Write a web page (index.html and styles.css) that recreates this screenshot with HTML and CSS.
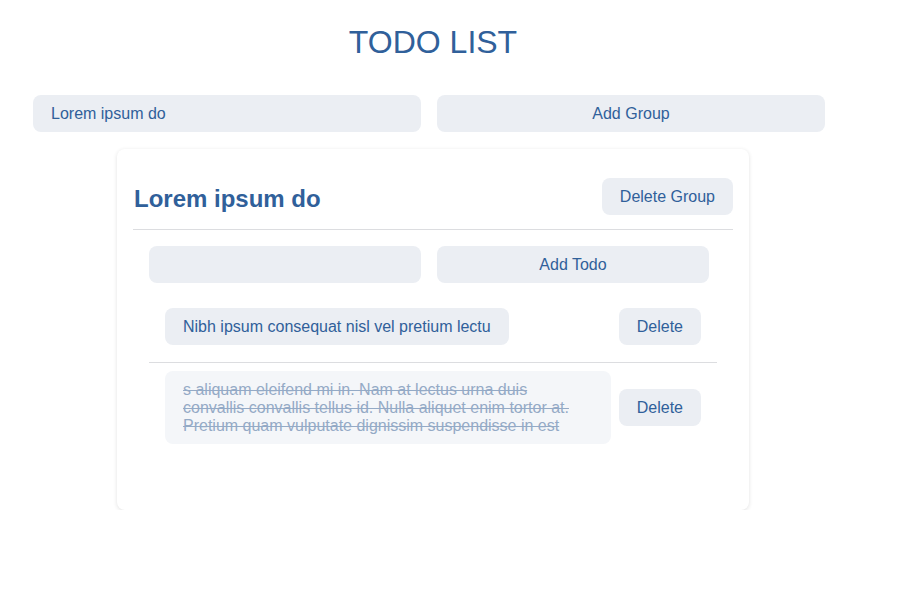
FILE: index.html
```html
<!DOCTYPE html>
<html lang="en">
<head>
<meta charset="utf-8">
<title>Todo List</title>
<link rel="stylesheet" href="styles.css">
</head>
<body>
<div class="app">
  <h1 class="title">TODO LIST</h1>
  <div class="add-group">
    <input class="field" type="text" value="Lorem ipsum do">
    <button class="btn">Add Group</button>
  </div>
  <section class="card">
    <header class="card-header">
      <h2 class="group-name">Lorem ipsum do</h2>
      <button class="btn">Delete Group</button>
    </header>
    <div class="add-todo">
      <input class="field" type="text" value="">
      <button class="btn">Add Todo</button>
    </div>
    <ul class="todos">
      <li class="todo">
        <span class="todo-text">Nibh ipsum consequat nisl vel pretium lectu</span>
        <button class="btn">Delete</button>
      </li>
      <li class="todo">
        <span class="todo-text done">s aliquam eleifend mi in. Nam at lectus urna duis convallis convallis tellus id. Nulla aliquet enim tortor at. Pretium quam vulputate dignissim suspendisse in est</span>
        <button class="btn">Delete</button>
      </li>
    </ul>
  </section>
</div>
</body>
</html>
```

FILE: styles.css
```css
* { box-sizing: border-box; }

body {
  margin: 0;
  background: #ffffff;
  font-family: "Liberation Sans", Arial, sans-serif;
  color: #30609a;
}

.app {
  width: 866px;
  padding-top: 24px;
}

.title {
  margin: 0 0 34px;
  text-align: center;
  font-size: 32px;
  font-weight: normal;
  line-height: 37px;
  color: #30609a;
}

.add-group {
  display: grid;
  grid-template-columns: 1fr 1fr;
  gap: 16px;
  margin: 0 41px 0 33px;
}

.field,
.btn {
  height: 37px;
  border: none;
  border-radius: 8px;
  background: #ebeef3;
  font-family: inherit;
  font-size: 16px;
  color: #30609a;
  padding: 0 18px;
  outline: none;
}

.btn {
  cursor: pointer;
  text-align: center;
}

.card {
  width: 632px;
  margin: 17px auto 0;
  padding: 16px 16px 16px;
  background: #ffffff;
  border-radius: 8px;
  box-shadow: 0 1px 4px rgba(0, 0, 0, 0.12);
}

.card-header {
  display: flex;
  align-items: flex-start;
  justify-content: space-between;
  height: 65px;
  border-bottom: 1px solid #dcdde0;
}

.group-name {
  margin: 20px 0 0 1px;
  font-size: 24px;
  font-weight: bold;
  line-height: 28px;
  color: #30609a;
}

.card-header .btn {
  margin-top: 13px;
}

.add-todo {
  display: grid;
  grid-template-columns: 272px 272px;
  gap: 16px;
  margin: 16px 16px 0;
}

.todos {
  list-style: none;
  margin: 17px 0 34px;
  padding: 0 16px;
}

.todo {
  display: flex;
  align-items: center;
  justify-content: space-between;
  gap: 8px;
  padding: 8px 16px 16px;
}

.todo:not(:last-child) {
  padding-bottom: 17px;
  border-bottom: 1px solid #dcdde0;
}

.todo-text {
  flex: 0 1 auto;
  padding: 9.5px 18px;
  border-radius: 8px;
  background: #ebeef3;
  font-size: 16px;
  line-height: 18px;
  color: #30609a;
}

.todo-text.done {
  background: #f4f6f9;
  color: #94aac6;
  text-decoration: line-through;
}

.todo .btn {
  flex: 0 0 auto;
}
```
